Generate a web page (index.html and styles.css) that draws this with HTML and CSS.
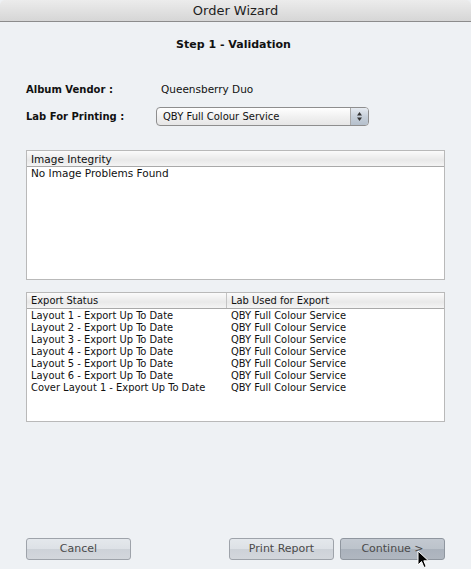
FILE: index.html
```html
<!DOCTYPE html>
<html>
<head>
<meta charset="utf-8">
<link rel="stylesheet" href="styles.css">
</head>
<body>
<div class="window">
  <div class="titlebar">Order Wizard</div>
  <div class="content">
    <div class="step">Step 1 - Validation</div>
    <div class="form-row vendor">
      <div class="label">Album Vendor :</div>
      <div class="value">Queensberry Duo</div>
    </div>
    <div class="form-row lab">
      <div class="label">Lab For Printing :</div>
      <div class="select">
        <span class="select-text">QBY Full Colour Service</span>
        <span class="select-arrows">
          <svg width="7" height="11" viewBox="0 0 7 11"><path d="M3.5 1 L6 4.5 H1 Z" fill="#333"/><path d="M3.5 10 L6 6.5 H1 Z" fill="#333"/></svg>
        </span>
      </div>
    </div>
    <div class="panel integrity">
      <div class="panel-head"><div class="col">Image Integrity</div></div>
      <div class="panel-body">
        <div class="row"><div class="col">No Image Problems Found</div></div>
      </div>
    </div>
    <div class="panel export">
      <div class="panel-head"><div class="col c1">Export Status</div><div class="col c2">Lab Used for Export</div></div>
      <div class="panel-body">
        <div class="row"><div class="col c1">Layout 1 - Export Up To Date</div><div class="col c2">QBY Full Colour Service</div></div>
        <div class="row"><div class="col c1">Layout 2 - Export Up To Date</div><div class="col c2">QBY Full Colour Service</div></div>
        <div class="row"><div class="col c1">Layout 3 - Export Up To Date</div><div class="col c2">QBY Full Colour Service</div></div>
        <div class="row"><div class="col c1">Layout 4 - Export Up To Date</div><div class="col c2">QBY Full Colour Service</div></div>
        <div class="row"><div class="col c1">Layout 5 - Export Up To Date</div><div class="col c2">QBY Full Colour Service</div></div>
        <div class="row"><div class="col c1">Layout 6 - Export Up To Date</div><div class="col c2">QBY Full Colour Service</div></div>
        <div class="row"><div class="col c1">Cover Layout 1 - Export Up To Date</div><div class="col c2">QBY Full Colour Service</div></div>
      </div>
    </div>
    <div class="buttons">
      <div class="btn">Cancel</div>
      <div class="right-btns">
        <div class="btn">Print Report</div>
        <div class="btn primary">Continue &gt;
          <svg class="cursor" width="13" height="19" viewBox="0 0 13 19"><path d="M1 1 L1 15 L4.5 11.5 L7 17.5 L9.2 16.5 L6.8 10.8 L11.5 10.8 Z" fill="#000" stroke="#fff" stroke-width="1"/></svg>
        </div>
      </div>
    </div>
  </div>
</div>
</body>
</html>
```

FILE: styles.css
```css
html, body {
  margin: 0;
  padding: 0;
  background: #eef1f4;
}
body {
  width: 471px;
  height: 569px;
  overflow: hidden;
  font-family: "DejaVu Sans", Verdana, sans-serif;
  color: #111;
}
.window {
  width: 471px;
  height: 569px;
  display: flex;
  flex-direction: column;
  background: #eef1f4;
}
.titlebar {
  height: 21px;
  line-height: 22px;
  text-align: center;
  font-size: 13px;
  color: #1e1e1e;
  background: linear-gradient(#ececec, #d6d6d6);
  border-bottom: 1px solid #8c8c8c;
  border-radius: 5px 5px 0 0;
  flex: none;
}
.content {
  flex: 1;
  display: flex;
  flex-direction: column;
  padding: 0 26px 0 26px;
}
.step {
  margin-top: 16px;
  height: 14px;
  line-height: 14px;
  text-align: center;
  font-weight: bold;
  font-size: 11px;
  padding-right: 4px;
}
.form-row {
  display: flex;
  align-items: center;
  font-size: 10.5px;
}
.label {
  width: 130px;
  font-weight: bold;
  font-size: 10px;
}
.vendor {
  margin-top: 30px;
  height: 14px;
}
.vendor .value {
  margin-left: 5px;
}
.lab {
  margin-top: 11px;
  height: 19px;
}
.select {
  width: 211px;
  height: 17px;
  border: 1px solid #8e8e8e;
  border-radius: 4px;
  background: linear-gradient(#ffffff, #f1f1f1 50%, #e6e6e6);
  display: flex;
  align-items: center;
  font-size: 10px;
}
.select-text {
  flex: 1;
  padding-left: 6px;
}
.select-arrows {
  width: 17px;
  height: 17px;
  border-left: 1px solid #a8a8a8;
  border-radius: 0 3px 3px 0;
  background: linear-gradient(#e6ebf1, #c7d0da 50%, #b5c0cc);
  display: flex;
  align-items: center;
  justify-content: center;
}
.panel {
  width: 417px;
  height: 128px;
  border: 1px solid #b9b9b9;
  background: #fff;
  font-size: 10.5px;
  display: flex;
  flex-direction: column;
}
.integrity {
  margin-top: 24px;
}
.export {
  margin-top: 12px;
  font-family: "DejaVu Sans Condensed", "DejaVu Sans", sans-serif;
  font-size: 11px;
}
.export .panel-body {
  padding-top: 1px;
}
.panel-head {
  height: 15px;
  line-height: 16px;
  border-bottom: 1px solid #a9a9a9;
  background: linear-gradient(#fbfbfb, #e9e9e9 60%, #f4f4f4);
  display: flex;
  flex: none;
}
.panel-body {
  flex: 1;
}
.row {
  display: flex;
  height: 12px;
  line-height: 12px;
}
.col {
  padding-left: 4px;
  white-space: nowrap;
}
.c1 {
  width: 195px;
}
.panel-head .c1 {
  border-right: 1px solid #c4c4c4;
}
.row .c1 {
  width: 196px;
}
.buttons {
  margin-top: auto;
  margin-bottom: 9px;
  display: flex;
  justify-content: space-between;
}
.right-btns {
  display: flex;
  gap: 6px;
}
.btn {
  position: relative;
  width: 103px;
  height: 20px;
  line-height: 20px;
  text-align: center;
  font-size: 11px;
  color: #4a4a4a;
  border: 1px solid #9ea3aa;
  border-radius: 3px;
  background: linear-gradient(#e4e8ec, #dde1e6 50%, #cdd2d8 50%, #d3d7dc);
}
.btn.primary {
  border-color: #8f969f;
  background: linear-gradient(#c3c9d1, #bcc3cb 50%, #aab2bc 50%, #b0b7c0);
}
.cursor {
  position: absolute;
  left: 76px;
  top: 11px;
}
```
